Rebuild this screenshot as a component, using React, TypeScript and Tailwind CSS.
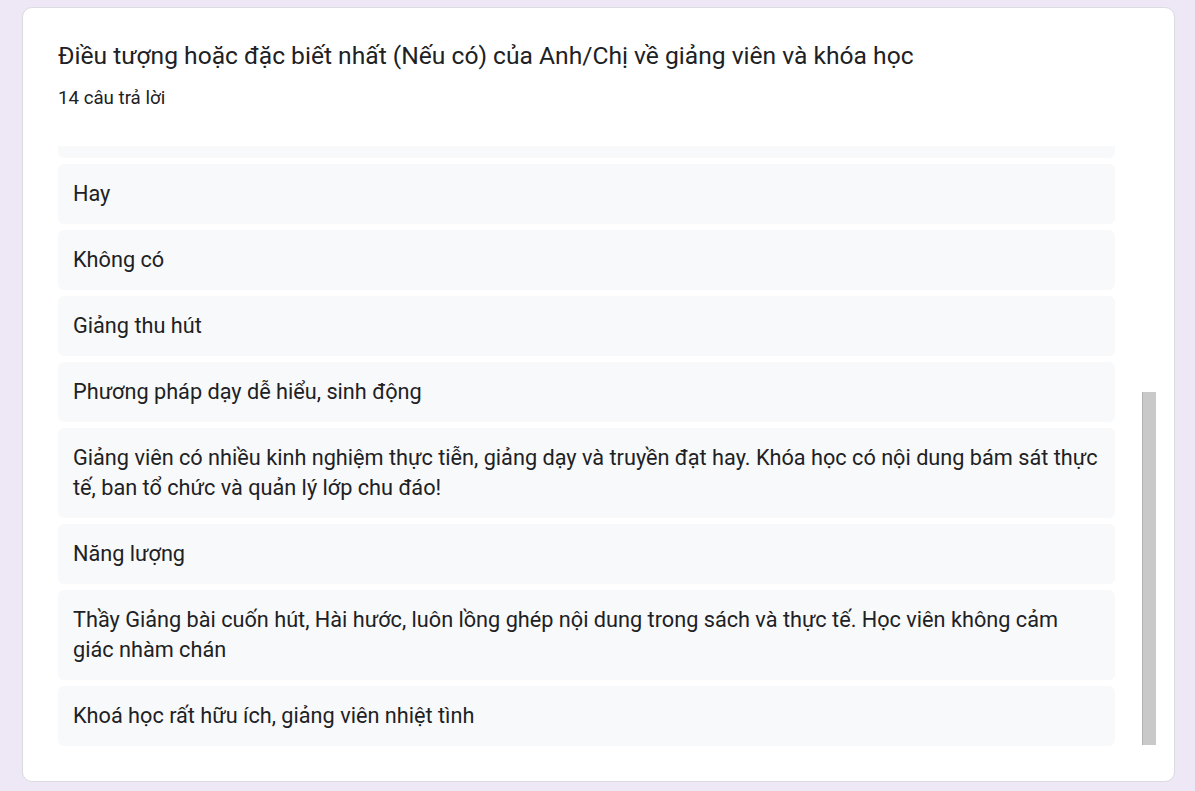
import React from "react";

const answers = [
  "Hay",
  "Không có",
  "Giảng thu hút",
  "Phương pháp dạy dễ hiểu, sinh động",
  "Giảng viên có nhiều kinh nghiệm thực tiễn, giảng dạy và truyền đạt hay. Khóa học có nội dung bám sát thực tế, ban tổ chức và quản lý lớp chu đáo!",
  "Năng lượng",
  "Thầy Giảng bài cuốn hút, Hài hước, luôn lồng ghép nội dung trong sách và thực tế. Học viên không cảm giác nhàm chán",
  "Khoá học rất hữu ích, giảng viên nhiệt tình",
];

export default function App() {
  return (
    <div
      className="h-[791px] w-full bg-[#ede7f6] pl-[22px] pr-[20px] pt-[7px] pb-[9px] overflow-hidden"
      style={{ fontFamily: "Roboto, 'Noto Sans', sans-serif" }}
    >
      <div className="h-full bg-white border border-[#dadce0] rounded-[10px] pl-[35px] pr-[18px] pt-[32px] pb-[35px] flex flex-col text-[#202124]">
        <h2 className="text-[24.62px] leading-[32px] font-normal whitespace-nowrap">
          Điều tượng hoặc đặc biết nhất (Nếu có) của Anh/Chị về giảng viên và khóa học
        </h2>
        <div className="mt-[14px] text-[18.7px] leading-[24px]">14 câu trả lời</div>

        <div className="mt-[36px] flex h-[600px] shrink-0">
          {/* list scrolled down: only the tail of the previous answer shows */}
          <div className="w-[1057px] shrink-0 h-full overflow-hidden flex flex-col justify-end gap-[6px]">
            <div className="shrink-0 h-[12px] bg-[#f8f9fa] rounded-b-[6px]" />
            {answers.map((a, i) => (
              <div
                key={i}
                className="shrink-0 bg-[#f8f9fa] rounded-[6px] px-[15px] py-[15px] text-[21.7px] leading-[30px]"
              >
                {a}
              </div>
            ))}
          </div>
          <div className="w-[27px] shrink-0" />
          <div className="w-[14px] shrink-0 h-full flex flex-col">
            <div className="h-[246px] shrink-0" />
            <div className="h-[353px] bg-[#c9c9c9] border-l border-[#b3b3b3]" />
          </div>
        </div>
      </div>
    </div>
  );
}
